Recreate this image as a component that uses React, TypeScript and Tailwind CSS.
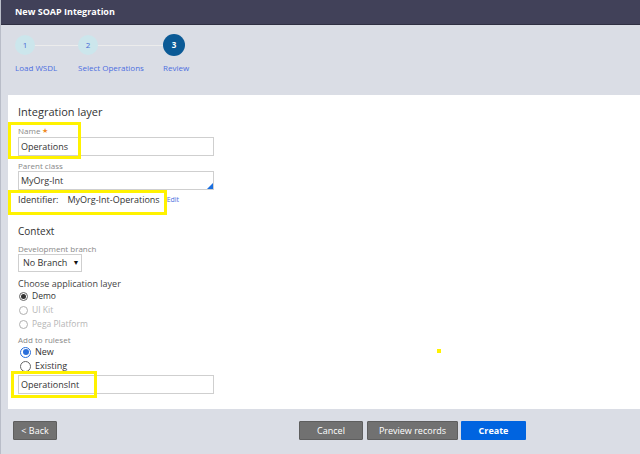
import React from "react";

const font = { fontFamily: '"Open Sans", "Noto Sans", sans-serif' };

function Radio({ checked, blue, disabled, label, big }: { checked?: boolean; blue?: boolean; disabled?: boolean; label: string; big?: boolean }) {
  return (
    <div className="flex items-center gap-[4px] h-[14px]">
      <span
        className={`${big ? "w-[11px] h-[11px]" : "w-[9px] h-[9px]"} rounded-full border flex items-center justify-center bg-white ${
          blue ? "border-[#2a6fdb]" : disabled ? "border-[#b0b0b0]" : "border-[#666]"
        }`}
      >
        {checked && <span className={`${big ? "w-[6px] h-[6px]" : "w-[5px] h-[5px]"} rounded-full ${blue ? "bg-[#2a6fdb]" : "bg-[#333]"}`} />}
      </span>
      <span className={`${big ? "text-[9px]" : "text-[8.5px]"} leading-[14px] ${disabled ? "text-[#b5b5b5]" : "text-[#333]"}`}>{label}</span>
    </div>
  );
}

export default function App() {
  return (
    <div className="w-[640px] h-[454px] bg-[#dadde5] relative overflow-hidden border-l border-[#b9bdc8]" style={font}>
      <div className="h-[25px] bg-[#414159] border-b border-[#2f2f42] flex items-center pl-[14px]">
        <span className="text-white font-bold text-[9px]">New SOAP Integration</span>
      </div>

      <div className="relative h-[70px]">
        <div className="absolute left-[24px] top-[20px] w-[150px] h-[1px] bg-[#ececec]" />
        <div className="absolute left-[14px] top-[10px] w-[20px] h-[20px] rounded-full bg-[#cce6ec] flex items-center justify-center text-[8px] text-[#4a6bd6]">1</div>
        <div className="absolute left-[77px] top-[10px] w-[20px] h-[20px] rounded-full bg-[#cce6ec] flex items-center justify-center text-[8px] text-[#4a6bd6]">2</div>
        <div className="absolute left-[162px] top-[9px] w-[22px] h-[22px] rounded-full bg-[#0b5a96] flex items-center justify-center text-[8px] font-bold text-white">3</div>
        <div className="absolute left-[14px] top-[37px] text-[8px] text-[#4d6ee0]">Load WSDL</div>
        <div className="absolute left-[77px] top-[37px] text-[8px] text-[#4d6ee0]">Select Operations</div>
        <div className="absolute left-[162px] top-[37px] text-[8px] text-[#4d6ee0]">Review</div>
      </div>

      <div className="ml-[7px] bg-white h-[314px] pl-[10px] pt-[10px] relative">
        <div className="text-[11px] text-[#333] h-[14px] leading-[14px]">Integration layer</div>
        <div className="mt-[7px] text-[8px] text-[#888] h-[10px] leading-[10px] flex items-center gap-[2px]">
          <span>Name</span>
          <span className="text-[#f08a24] text-[7px] leading-[10px]">★</span>
        </div>
        <div className="mt-[1px] w-[196px] h-[19px] border border-[#cfcfcf] flex items-center px-[2px] text-[9px] text-[#333]">Operations</div>
        <div className="mt-[5px] text-[8px] text-[#888] h-[10px] leading-[10px]">Parent class</div>
        <div className="w-[196px] h-[19px] border border-[#cfcfcf] flex items-center px-[2px] text-[9px] text-[#333] relative">
          MyOrg-Int
          <span className="absolute right-0 bottom-0 w-0 h-0 border-l-[6px] border-l-transparent border-b-[6px] border-b-[#1a6fe0]" />
        </div>
        <div className="mt-[3px] flex items-center h-[14px] text-[9px] text-[#333]">
          <span>Identifier:</span>
          <span className="ml-[9px]">MyOrg-Int-Operations</span>
          <span className="ml-[7px] text-[7px] text-[#4d6ee0]">Edit</span>
        </div>

        <div className="mt-[18px] text-[10px] text-[#333] h-[13px] leading-[13px]">Context</div>
        <div className="mt-[6px] text-[8px] text-[#888] h-[10px] leading-[10px]">Development branch</div>
        <div className="w-[64px] h-[18px] border border-[#cfcfcf] flex items-center pl-[4px] gap-[5px] text-[9px] text-[#333]">
          <span>No Branch</span>
          <span className="text-[7px] text-[#111]">▼</span>
        </div>
        <div className="mt-[6px] text-[9px] text-[#444] h-[11px] leading-[11px]">Choose application layer</div>
        <div className="flex flex-col pl-[1px]">
          <Radio checked label="Demo" />
          <Radio disabled label="UI Kit" />
          <Radio disabled label="Pega Platform" />
        </div>
        <div className="mt-[4px] text-[8px] text-[#888] h-[10px] leading-[10px]">Add to ruleset</div>
        <div className="flex flex-col pl-[2px]">
          <Radio checked blue big label="New" />
          <Radio big label="Existing" />
        </div>
        <div className="mt-[2px] w-[196px] h-[19px] border border-[#cfcfcf] flex items-center px-[2px] text-[9px] text-[#333]">OperationsInt</div>
      </div>

      <div className="flex items-center mt-[12px] pl-[12px] pr-[114px]">
        <button className="w-[44px] h-[19px] bg-[#717171] border border-[#5e5e5e] rounded-[1px] text-white text-[9px]">&lt; Back</button>
        <div className="flex-1" />
        <button className="w-[64px] h-[19px] bg-[#717171] border border-[#5e5e5e] rounded-[1px] text-white text-[9px]">Cancel</button>
        <button className="ml-[4px] w-[91px] h-[19px] bg-[#717171] border border-[#5e5e5e] rounded-[1px] text-white text-[9px]">Preview records</button>
        <button className="ml-[3px] w-[65px] h-[19px] bg-[#0064e0] rounded-[1px] text-white text-[9px] font-bold">Create</button>
      </div>

      <div className="absolute left-[7px] top-[122px] w-[73px] h-[37px] border-[3px] border-[#fff200]" />
      <div className="absolute left-[7px] top-[190px] w-[159px] h-[25px] border-[3px] border-[#fff200]" />
      <div className="absolute left-[10px] top-[371px] w-[86px] h-[27px] border-[3px] border-[#fff200]" />
      <div className="absolute left-[436px] top-[349px] w-[4px] h-[4px] bg-[#fff200]" />
    </div>
  );
}
